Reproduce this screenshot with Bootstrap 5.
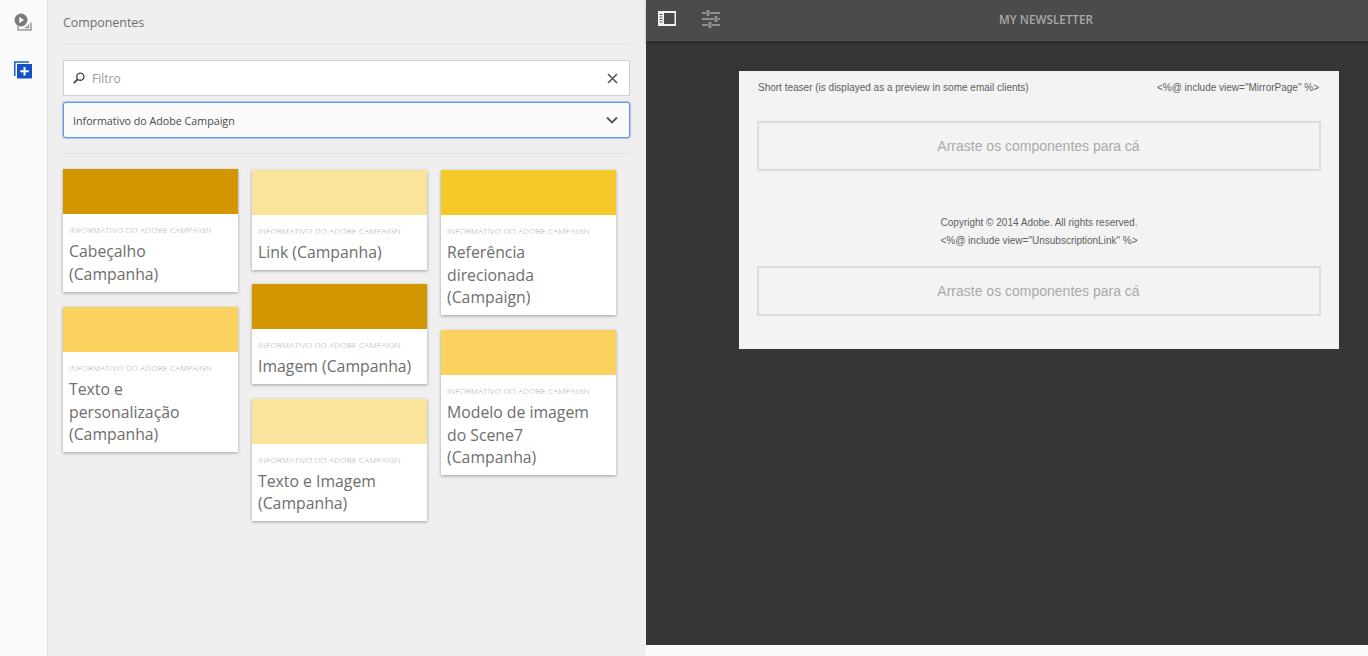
<!DOCTYPE html>
<html lang="pt">
<head>
    <meta charset="UTF-8">
    <meta name="viewport" content="width=device-width, initial-scale=1.0">
    <title>My Newsletter</title>
    <link href="https://cdn.jsdelivr.net/npm/bootstrap@5.3.0/dist/css/bootstrap.min.css" rel="stylesheet">
    <style>
        html, body { height: 100%; }
        body {
            background-color: #fafafa;
            font-family: "Open Sans", "Liberation Sans", sans-serif;
            overflow: hidden;
        }
        .app-shell { height: 656px; }
        .side-rail {
            width: 48px;
            background-color: #fafafa;
            border-right: 1px solid #e2e2e2;
            padding-top: 13px;
        }
        .rail-icon { display: block; margin-left: 14px; }
        .rail-icon + .rail-icon { margin-top: 30px; }
        .comp-panel {
            width: 598px;
            background-color: #efefef;
            padding: 0 16px 0 15px;
        }
        .panel-title {
            height: 45px;
            border-bottom: 1px solid #e2e2e2;
            font-size: 12.4px;
            line-height: 45px;
            color: #6e6e6e;
        }
        .filter-box {
            height: 36px;
            margin-top: 15px;
            background-color: #fff;
            border: 1px solid #d0d0d0;
            padding: 0 11px 0 9px;
        }
        .filter-text { font-size: 12px; color: #999; margin-left: 7px; padding-top: 1px; }
        .group-select {
            height: 36px;
            margin-top: 6px;
            background-color: #fafafa;
            border: 1px solid #6693dc;
            border-radius: 3px;
            box-shadow: 0 0 1px 1px rgba(102, 147, 220, .45);
            padding: 2px 11px 0 9px;
            font-size: 10.7px;
            color: #4b4b4b;
        }
        .group-select svg { margin-top: -2px; }
        .panel-rule { border-bottom: 1px solid #e2e2e2; height: 16px; }
        .card-cols { gap: 14px; margin-top: 15px; }
        .card-col { width: 175px; gap: 14.45px; }
        .card-col.shift { padding-top: 1px; }
        .col-loose { gap: 15.5px; }
        .col-even { gap: 15px; }
        .comp-card {
            border: 0;
            border-radius: 0;
            background-color: #fff;
            box-shadow: 0 1px 3px rgba(0, 0, 0, .35);
        }
        .card-swatch { height: 45px; }
        .swatch-dark { background-color: #d29600; }
        .swatch-mid { background-color: #fbd25e; }
        .swatch-light { background-color: #fae49c; }
        .swatch-gold { background-color: #f6c92b; }
        .card-text { padding: 10px 6px 6.5px; }
        .card-label {
            font-size: 8px;
            font-weight: 300;
            letter-spacing: .27px;
            line-height: 11px;
            color: #a8a8a8;
            white-space: nowrap;
            text-transform: uppercase;
            margin-bottom: 5px;
        }
        .card-name {
            font-size: 15.8px;
            line-height: 22.5px;
            color: #6e6e6e;
        }
        .preview-pane {
            width: 722px;
            height: 645px;
            background-color: #353535;
        }
        .preview-bar {
            height: 42px;
            background-color: #4b4b4b;
            border-bottom: 1px solid #2e2e2e;
            box-shadow: 0 1px 2px rgba(0, 0, 0, .3);
            padding: 0 0 4px 12px;
            gap: 26px;
        }
        .bar-title {
            position: absolute;
            top: 0;
            left: 78px;
            right: 0;
            text-align: center;
            font-size: 11.7px;
            font-weight: 600;
            line-height: 39px;
            color: #a8a8a8;
        }
        .email-page {
            width: 600px;
            height: 278px;
            margin: 29px 0 0 93px;
            background-color: #f3f3f3;
            padding: 10px 18px 0;
            font-family: "Liberation Sans", Arial, sans-serif;
            font-size: 10px;
            color: #5e5e5e;
        }
        .email-head { line-height: 13px; padding: 0 2px 0 1px; }
        .drop-zone {
            height: 50px;
            border: 2px solid #dcdcdc;
            font-size: 14px;
            color: #aaa;
            line-height: 46px;
            text-align: center;
            padding-right: 1px;
        }
        .zone-first { margin-top: 27px; }
        .email-foot { margin: 43px 0 16px; text-align: center; line-height: 18px; }
    </style>
</head>
<body>

<div class="app-shell d-flex">
    <div class="side-rail flex-shrink-0">
        <svg class="rail-icon" width="18" height="18" viewBox="0 0 18 18">
            <circle cx="7" cy="7" r="6.5" fill="#7b7b7b"/>
            <path d="M5.300 3.800 10 7l-4.700 3.200z" fill="#fafafa"/>
            <path d="M9 17h8V9.500" fill="none" stroke="#9a9a9a" stroke-width="1.500"/>
            <path d="M4 13v4h5" fill="none" stroke="#9a9a9a" stroke-width="1.500"/>
            <path d="M11 14.500h3.500v-3" fill="none" stroke="#8a8a8a" stroke-width="1.300"/>
        </svg>
        <svg class="rail-icon" width="18" height="18" viewBox="0 0 18 18">
            <path d="M.8 15V1H15" fill="none" stroke="#1d5dc7" stroke-width="1.500"/>
            <rect x="3" y="3" width="15" height="14.500" fill="#1450c8"/>
            <path d="M10.500 6v8.500M6.300 10.200h8.400" stroke="#fff" stroke-width="2"/>
        </svg>
    </div>

    <div class="comp-panel flex-shrink-0">
        <div class="panel-title">Componentes</div>

        <div class="filter-box d-flex align-items-center">
            <svg width="12" height="12" viewBox="0 0 12 12">
                <circle cx="7.300" cy="4.700" r="3.600" fill="none" stroke="#444" stroke-width="1.400"/>
                <path d="M4.600 7.400.8 11.200" stroke="#444" stroke-width="1.800"/>
            </svg>
            <span class="filter-text flex-grow-1">Filtro</span>
            <svg width="11" height="11" viewBox="0 0 11 11">
                <path d="m1 1 9 9M10 1l-9 9" stroke="#5a5a5a" stroke-width="1.700"/>
            </svg>
        </div>

        <div class="group-select d-flex align-items-center justify-content-between">
            <span>Informativo do Adobe Campaign</span>
            <svg width="12" height="8" viewBox="0 0 12 8">
                <path d="m1 1.500 5 5 5-5" fill="none" stroke="#555" stroke-width="1.800"/>
            </svg>
        </div>

        <div class="panel-rule"></div>

        <div class="card-cols d-flex align-items-start">
            <div class="card-col col-loose d-flex flex-column">
                <div class="card comp-card">
                    <div class="card-swatch swatch-dark"></div>
                    <div class="card-text">
                        <div class="card-label">Informativo do Adobe Campaign</div>
                        <div class="card-name">Cabeçalho (Campanha)</div>
                    </div>
                </div>
                <div class="card comp-card">
                    <div class="card-swatch swatch-mid"></div>
                    <div class="card-text">
                        <div class="card-label">Informativo do Adobe Campaign</div>
                        <div class="card-name">Texto e personalização (Campanha)</div>
                    </div>
                </div>
            </div>
            <div class="card-col shift d-flex flex-column">
                <div class="card comp-card">
                    <div class="card-swatch swatch-light"></div>
                    <div class="card-text">
                        <div class="card-label">Informativo do Adobe Campaign</div>
                        <div class="card-name">Link (Campanha)</div>
                    </div>
                </div>
                <div class="card comp-card">
                    <div class="card-swatch swatch-dark"></div>
                    <div class="card-text">
                        <div class="card-label">Informativo do Adobe Campaign</div>
                        <div class="card-name">Imagem (Campanha)</div>
                    </div>
                </div>
                <div class="card comp-card">
                    <div class="card-swatch swatch-light"></div>
                    <div class="card-text">
                        <div class="card-label">Informativo do Adobe Campaign</div>
                        <div class="card-name">Texto e Imagem (Campanha)</div>
                    </div>
                </div>
            </div>
            <div class="card-col col-even shift d-flex flex-column">
                <div class="card comp-card">
                    <div class="card-swatch swatch-gold"></div>
                    <div class="card-text">
                        <div class="card-label">Informativo do Adobe Campaign</div>
                        <div class="card-name">Referência direcionada (Campaign)</div>
                    </div>
                </div>
                <div class="card comp-card">
                    <div class="card-swatch swatch-mid"></div>
                    <div class="card-text">
                        <div class="card-label">Informativo do Adobe Campaign</div>
                        <div class="card-name">Modelo de imagem do Scene7 (Campanha)</div>
                    </div>
                </div>
            </div>
        </div>
    </div>

    <div class="preview-pane flex-shrink-0">
        <div class="preview-bar d-flex align-items-center position-relative">
            <span class="bar-title">MY NEWSLETTER</span>
            <svg width="18" height="15" viewBox="0 0 18 15">
                <path fill-rule="evenodd" d="M0 0h18v15H0zM6 2v11h10.500V2z" fill="#f2f2f2"/>
                <path d="M1.500 3.500h3M1.500 6h3M1.500 8.500h3M1.500 11h3" stroke="#4b4b4b" stroke-width="1"/>
            </svg>
            <svg width="18" height="18" viewBox="0 0 18 18">
                <path d="M0 3h4M8 3h10M0 9h12M16 9h2M0 15h6M10 15h8" stroke="#8e8e8e" stroke-width="2"/>
                <path d="M6 0v6M14 6v6M8 12v6" stroke="#8e8e8e" stroke-width="3"/>
            </svg>
        </div>
        <div class="email-page">
            <div class="email-head d-flex justify-content-between">
                <span>Short teaser (is displayed as a preview in some email clients)</span>
                <span>&lt;%@ include view="MirrorPage" %&gt;</span>
            </div>
            <div class="drop-zone zone-first">Arraste os componentes para cá</div>
            <div class="email-foot">
                <div>Copyright © 2014 Adobe. All rights reserved.</div>
                <div>&lt;%@ include view="UnsubscriptionLink" %&gt;</div>
            </div>
            <div class="drop-zone">Arraste os componentes para cá</div>
        </div>
    </div>
</div>

<script src="https://cdn.jsdelivr.net/npm/bootstrap@5.3.0/dist/js/bootstrap.bundle.min.js"></script>
</body>
</html>
